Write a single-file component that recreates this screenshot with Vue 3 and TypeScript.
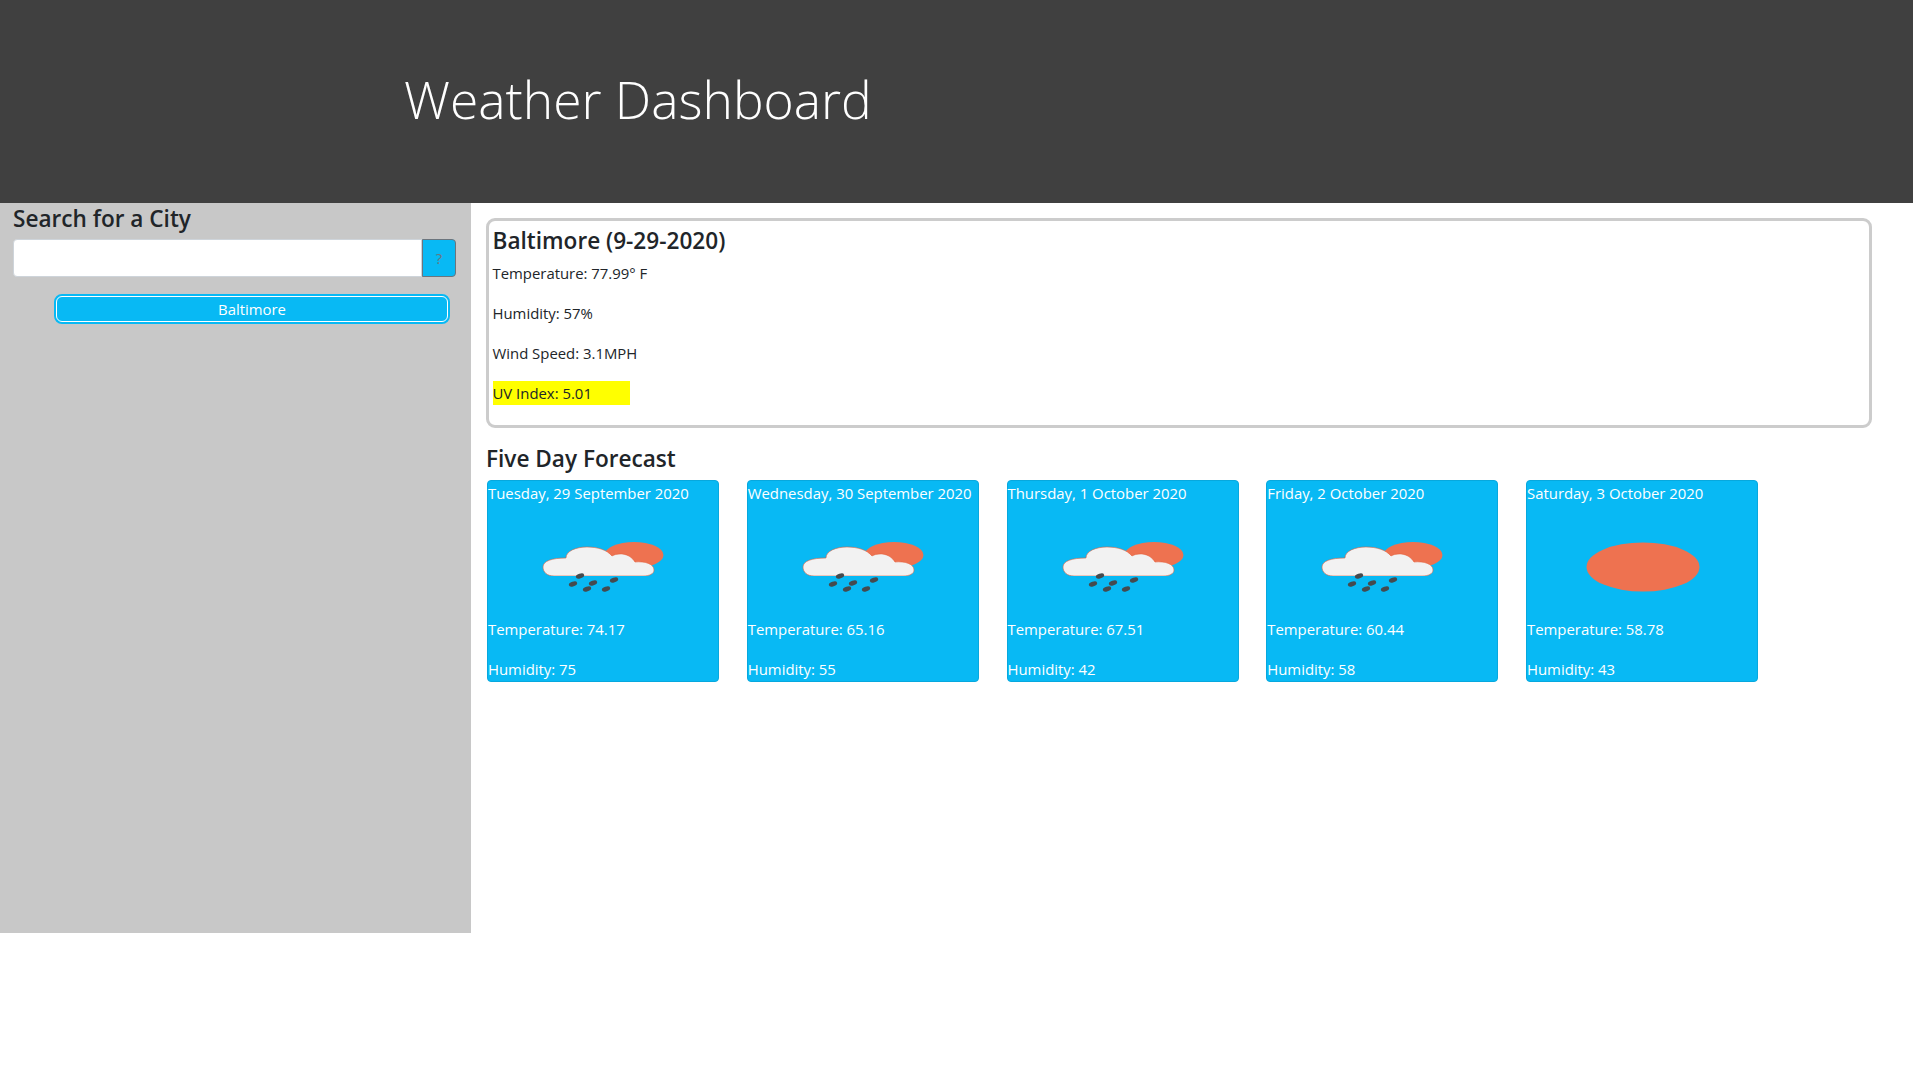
<script setup lang="ts">
type Day = { date: string; temp: string; humidity: number; clear?: boolean };

const days: Day[] = [
  { date: "Tuesday, 29 September 2020", temp: "74.17", humidity: 75 },
  { date: "Wednesday, 30 September 2020", temp: "65.16", humidity: 55 },
  { date: "Thursday, 1 October 2020", temp: "67.51", humidity: 42 },
  { date: "Friday, 2 October 2020", temp: "60.44", humidity: 58 },
  { date: "Saturday, 3 October 2020", temp: "58.78", humidity: 43, clear: true },
];

const drops = [
  [92, 59],
  [85, 67],
  [105, 66],
  [126, 63],
  [99, 72],
  [118, 72],
];
</script>

<template>
  <div class="page">
    <header class="header">
      <h1>Weather Dashboard</h1>
    </header>
    <div class="content">
      <aside class="sidebar">
        <h3>Search for a City</h3>
        <div class="search">
          <input type="text" />
          <button class="search-btn">?</button>
        </div>
        <button class="city">Baltimore</button>
      </aside>
      <main class="main">
        <section class="current">
          <h3>Baltimore (9-29-2020)</h3>
          <p>Temperature: 77.99° F</p>
          <p>Humidity: 57%</p>
          <p>Wind Speed: 3.1MPH</p>
          <p class="uv">UV Index: 5.01</p>
        </section>
        <h3 class="forecast-title">Five Day Forecast</h3>
        <div class="forecast">
          <div v-for="day in days" :key="day.date" class="card">
            <p class="date">{{ day.date }}</p>
            <svg class="icon" viewBox="0 0 230 100" width="230" height="100">
              <ellipse v-if="day.clear" cx="116" cy="50" rx="56.5" ry="24.5" fill="#ee7250" />
              <template v-else>
                <ellipse cx="146" cy="38" rx="29.5" ry="13" fill="#ee7250" />
                <path
                  d="M66 59C59 59 55 55 55 50C55 44 64 41 78 41C78 34 88 30 99 30C110 30 119 33 124 39C129 36 141 35 147 45C157 44 166 47 166 53C166 57 161 59 155 59Z"
                  fill="#f2f2f2"
                  stroke="#e4603d"
                  stroke-width="0.6"
                />
                <path d="M55 59H166V61H55Z" fill="#08b9f4" />
                <ellipse
                  v-for="[x, y] in drops"
                  :key="`${x}-${y}`"
                  :cx="x"
                  :cy="y"
                  rx="4.3"
                  ry="2.3"
                  :transform="`rotate(-18 ${x} ${y})`"
                  fill="#454a4e"
                />
              </template>
            </svg>
            <p>Temperature: {{ day.temp }}</p>
            <p class="last">Humidity: {{ day.humidity }}</p>
          </div>
        </div>
      </main>
    </div>
  </div>
</template>

<style scoped>
.page {
  width: 1913px;
  font-family: "Open Sans", "Noto Sans", sans-serif;
  font-size: 14.9px;
  line-height: 24px;
  color: #212529;
}

h3 {
  margin: 0;
  font-size: 22.6px;
  font-weight: 600;
  line-height: 28px;
}

p {
  margin: 0 0 16px;
}

.header {
  height: 203px;
  box-sizing: border-box;
  padding: 65px 0 0 404px;
  background: #404040;
}

.header h1 {
  margin: 0;
  font-size: 51.5px;
  font-weight: 300;
  line-height: 68px;
  color: #fff;
}

.content {
  display: flex;
}

.sidebar {
  width: 471px;
  height: 730px;
  box-sizing: border-box;
  padding: 2px 13px 0;
  background: #c8c8c8;
}

.search {
  display: flex;
  width: 443px;
  height: 38px;
  margin-top: 6px;
}

.search input {
  flex: 1;
  min-width: 0;
  box-sizing: border-box;
  border: 1px solid #ced4da;
  border-radius: 4px 0 0 4px;
  background: #fff;
}

.search-btn {
  width: 34px;
  padding: 0;
  border: 1px solid #6c757d;
  border-radius: 0 4px 4px 0;
  background: #08b9f4;
  color: #6c757d;
  font: inherit;
}

.city {
  display: block;
  width: 396px;
  height: 30px;
  box-sizing: border-box;
  margin: 17px 0 0 41px;
  padding: 0;
  border: 2px solid #08b9f4;
  border-radius: 8px;
  outline: 1px solid #fff;
  outline-offset: -3px;
  background: #08b9f4;
  color: #fff;
  font: inherit;
  line-height: 24px;
}

.main {
  flex: 1;
  padding: 15px 41px 0 15px;
}

.current {
  height: 210px;
  box-sizing: border-box;
  padding: 6px 4px 0 3.5px;
  border: 3px solid #ccc;
  border-radius: 9px;
}

.current h3 {
  margin-bottom: 6px;
}

.uv {
  width: 137px;
  background: #ff0;
}

.forecast-title {
  margin-top: 17px;
}

.forecast {
  display: flex;
  gap: 27.75px;
  margin-top: 7px;
  padding-left: 1px;
}

.card {
  width: 232px;
  height: 202px;
  box-sizing: border-box;
  border: 1px solid #07a8de;
  border-radius: 4px;
  background: #08b9f4;
  color: #fff;
  white-space: nowrap;
}

.date {
  margin-bottom: 12px;
}

.icon {
  display: block;
  filter: blur(0.4px);
}

.card p.last {
  margin-bottom: 0;
}
</style>
